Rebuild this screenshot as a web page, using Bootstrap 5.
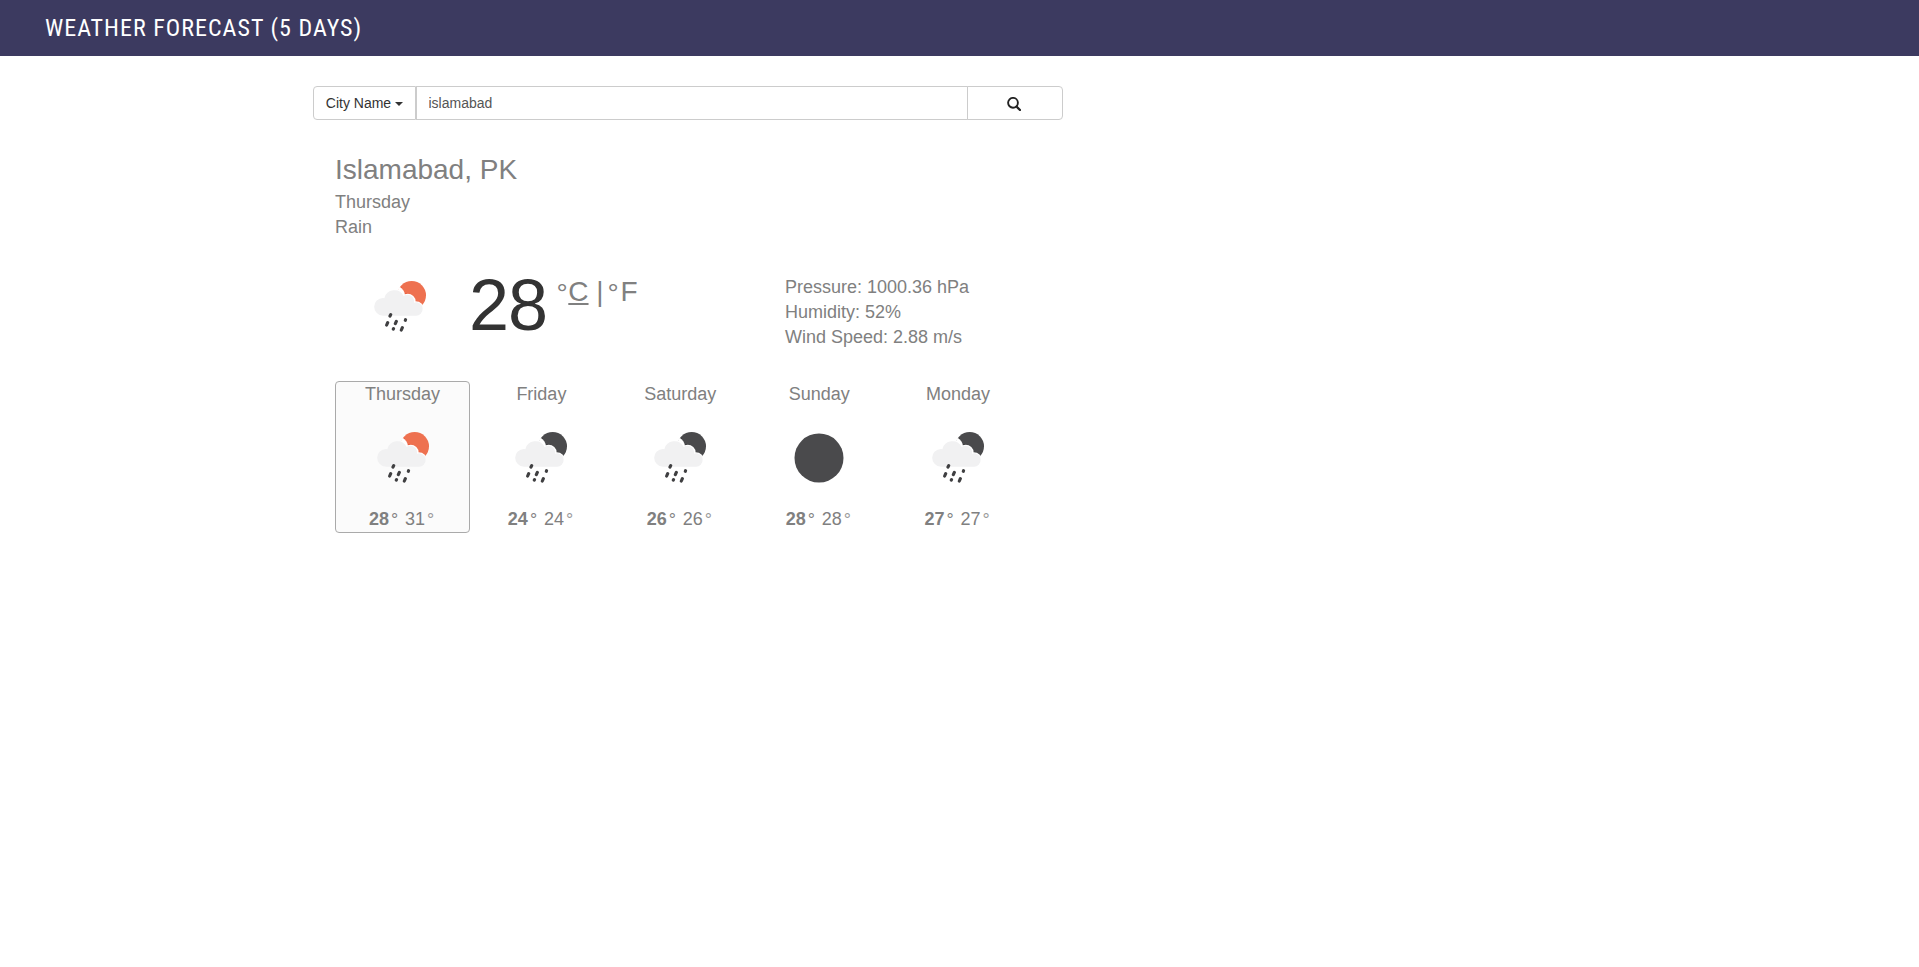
<!DOCTYPE html>
<html lang="en">
<head>
<meta charset="utf-8">
<meta name="viewport" content="width=device-width, initial-scale=1">
<title>Weather Forecast</title>
<link href="https://cdn.jsdelivr.net/npm/bootstrap@5.3.0/dist/css/bootstrap.min.css" rel="stylesheet">
<style>
body{font-family:"Liberation Sans",Arial,sans-serif;font-size:18px;line-height:25px;color:gray;background:#fff}
.topbar{height:56px;background:#3c3a60;padding:0 45px}
.topbar h1{font:400 24px/56px "Roboto Condensed",Roboto,sans-serif;letter-spacing:1.02px;color:#fff;text-transform:uppercase;white-space:nowrap}
.forecast-app{width:750px;margin-left:313px;padding-top:30px}
.search .btn,.search .form-control{height:34px;font-size:14px;line-height:20px;border:1px solid #ccc;padding:6px 11.5px;border-radius:4px;box-shadow:none}
.search .btn{color:#333;background:#fff;padding:6px 11px}
.search .kind{width:103px;border-radius:4px 0 0 4px}
.search .dropdown-toggle::after{border-width:4px 4px 0;margin-left:4px;vertical-align:2px}
.search .form-control{color:#555;border-radius:0;margin-left:0!important}
.search .go{width:96px;border-radius:0 4px 4px 0!important}
.search .go svg{margin:2px 2px 0 0}
.report{padding:0 22px}
.city{font-size:28px;line-height:40px;margin-top:30px}
.sky{width:52px;height:51px;display:block;overflow:visible}
.now{height:76px;margin-top:31px}
.big{font-size:72px;line-height:68px;letter-spacing:-1px;color:#333;width:88px;margin-left:43px}
.units{font-size:28px;line-height:42px;width:228px;white-space:nowrap}
.deg{display:inline-block;line-height:1;width:11.3px;vertical-align:-2px}
.units .deg{font-weight:300;margin-left:-.5px;margin-right:.5px}
.units u+.deg{margin-left:4.500px;margin-right:1px}
.days{gap:3.9px;margin-top:34px}
.day{width:135px;height:152px;border:1px solid transparent;border-radius:4px}
.day.active{background:#fbfbfb;border-color:#aaa}
.day .sky{margin:25px auto 24px}
.day .deg{width:11px;padding-left:2px;vertical-align:-1px;text-align:left}
.day .deg:last-child{color:#999}
</style>
</head>
<body>
<svg width="0" height="0" class="position-absolute">
<defs>
<clipPath id="disc"><circle cx="113" cy="43" r="44"/></clipPath>
<g id="cloudrain">
<g fill="#fff" clip-path="url(#disc)"><circle cx="101" cy="62" r="24"/><circle cx="126" cy="84" r="23"/><circle cx="61" cy="45" r="32"/></g>
<path fill="#f1f1f2" d="M27 104a26.500 26.500 0 0 1 0-53q2 0 4 .5A31 31 0 0 1 89 45 20 20 0 0 1 120 65 20 20 0 1 1 124 104Z"/>
<g stroke="#3f3f41" stroke-width="9.500" stroke-linecap="round"><path d="M48 105l2-4M38 132l3-7M64 128l3-7M58 144l.5-1M82 147l3-7M94 118l.6-2"/></g>
</g>
<symbol id="rainday" viewBox="0 0 156 153"><circle cx="113" cy="43" r="43" fill="#ee7150"/><path fill="#e84b2b" d="M80 16Q88 26 91 38Q117 35 122 60Q137 60 144 73L140 79 80 45Z"/><use href="#cloudrain"/></symbol>
<symbol id="rainnight" viewBox="0 0 156 153"><circle cx="113" cy="43" r="43" fill="#4a4a4c"/><path fill="#303032" d="M80 16Q88 26 91 38Q117 35 122 60Q137 60 144 73L140 79 80 45Z"/><use href="#cloudrain"/></symbol>
<symbol id="clearnight" viewBox="0 0 156 153"><circle cx="78" cy="78" r="73.500" fill="#4a4a4c"/></symbol>
</defs>
</svg>
<header class="topbar"><h1 class="m-0">Weather Forecast (5 days)</h1></header>
<main class="forecast-app">
<div class="input-group flex-nowrap search">
<button class="btn kind dropdown-toggle flex-shrink-0" type="button">City Name</button>
<input class="form-control" type="text" value="islamabad" aria-label="City">
<button class="btn go flex-shrink-0 d-flex align-items-center justify-content-center" type="button" aria-label="Search"><svg width="14" height="14" viewBox="0 0 14 14" fill="none" stroke="#222"><circle cx="6" cy="5.800" r="4.900" stroke-width="1.900"/><path d="M9.500 9.500l3.500 3.500" stroke-width="2.300" stroke-linecap="round"/></svg></button>
</div>
<section class="report">
<div class="city">Islamabad, PK</div>
<div>Thursday</div>
<div>Rain</div>
<div class="now d-flex">
<svg class="sky" style="margin:10px 0 0 39px"><use href="#rainday"/></svg>
<div class="big">28</div>
<div class="units"><span class="deg">°</span><u>C</u> |<span class="deg ms-1 me-1" style="width:8.8px">°</span>F</div>
<div class="text-nowrap pt-1"><div>Pressure: 1000.36 hPa</div><div>Humidity: 52%</div><div>Wind Speed: 2.88 m/s</div></div>
</div>
<div class="days d-flex text-center">
<div class="day active">Thursday<svg class="sky"><use href="#rainday"/></svg><b>28</b><span class="deg">°</span> 31<span class="deg">°</span></div>
<div class="day">Friday<svg class="sky"><use href="#rainnight"/></svg><b>24</b><span class="deg">°</span> 24<span class="deg">°</span></div>
<div class="day">Saturday<svg class="sky"><use href="#rainnight"/></svg><b>26</b><span class="deg">°</span> 26<span class="deg">°</span></div>
<div class="day">Sunday<svg class="sky"><use href="#clearnight"/></svg><b>28</b><span class="deg">°</span> 28<span class="deg">°</span></div>
<div class="day">Monday<svg class="sky"><use href="#rainnight"/></svg><b>27</b><span class="deg">°</span> 27<span class="deg">°</span></div>
</div>
</section>
</main>
<script src="https://cdn.jsdelivr.net/npm/bootstrap@5.3.0/dist/js/bootstrap.bundle.min.js"></script>
</body>
</html>
